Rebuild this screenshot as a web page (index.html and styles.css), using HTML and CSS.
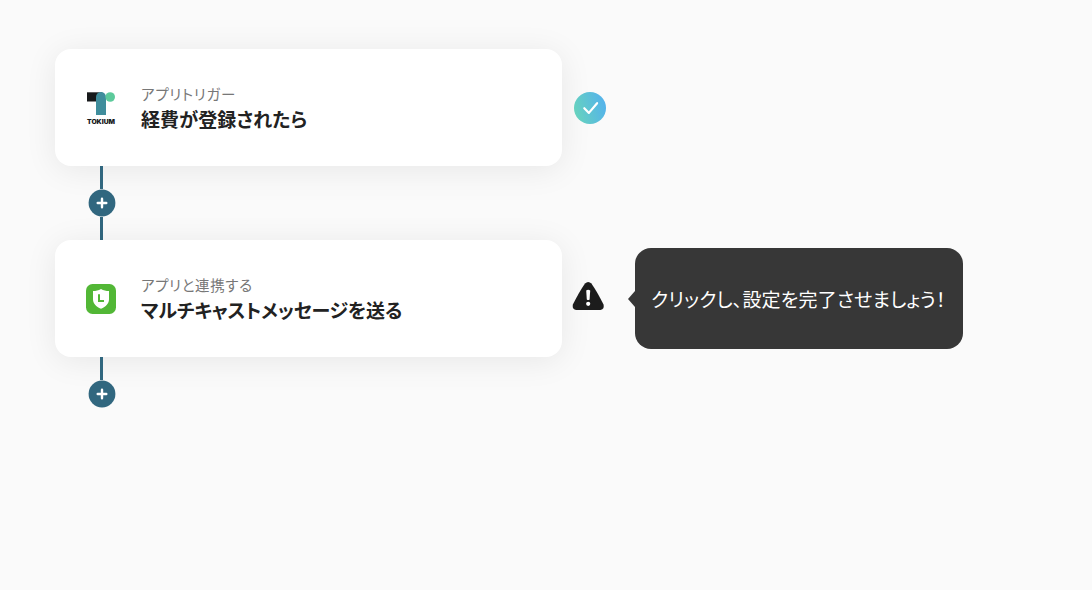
FILE: index.html
```html
<!DOCTYPE html>
<html lang="ja">
<head>
  <meta charset="UTF-8" />
  <meta name="viewport" content="width=device-width, initial-scale=1.0"/>
  <title>フローボット</title>
  <link rel="stylesheet" href="styles.css">
</head>
<body>

  <main class="flow">
    <div class="step">
      <div class="card">
        <svg class="app-icon" width="32" height="34" viewBox="0 0 32 34">
          <rect x="2" y="1.300" width="15" height="9.200" fill="#17191b"/>
          <path d="M11 24V6a5 5 0 0 1 10 0V24z" fill="#3f8d9c"/>
          <circle cx="25.200" cy="6" r="4.800" fill="#5cca9b"/>
          <text class="logo-text" x="2" y="32.600" textLength="28" lengthAdjust="spacingAndGlyphs">TOKIUM</text>
        </svg>
        <div class="card-text">
          <div class="label label-trigger">アプリトリガー</div>
          <div class="title title-trigger">経費が登録されたら</div>
        </div>
      </div>
      <svg class="status status-done" width="32" height="32" viewBox="0 0 32 32">
        <defs>
          <linearGradient id="done" x1="0" y1="0.650" x2="1" y2="0.350">
            <stop offset="0" stop-color="#67d3bd"/>
            <stop offset="1" stop-color="#54b2ec"/>
          </linearGradient>
        </defs>
        <circle cx="16" cy="16" r="16" fill="url(#done)"/>
        <path d="M10.300 16.200l4.600 4.700 8.200-9.700" fill="none" stroke="#fff" stroke-width="2.200" stroke-linecap="round" stroke-linejoin="round"/>
      </svg>
    </div>

    <div class="connector">
      <div class="line"></div>
      <button class="add" aria-label="追加">
        <svg width="28" height="28" viewBox="0 0 28 28"><circle cx="14" cy="14" r="13.400" fill="#31677f"/><path d="M14 9.700v8.600M9.700 14h8.600" stroke="#fff" stroke-width="2.400" stroke-linecap="round"/></svg>
      </button>
      <div class="line"></div>
    </div>

    <div class="step">
      <div class="card">
        <svg class="app-icon" width="32" height="34" viewBox="0 0 32 34">
          <rect x="1" y="2" width="30" height="30" rx="6.500" fill="#52b736"/>
          <path d="M16 7c2.600 1.400 5 2 8 2v8.200c0 4.400-3 7.300-8 9.500-5-2.200-8-5.100-8-9.500V9c3 0 5.400-.6 8-2z" fill="#fff"/>
          <path d="M14 12.300v6.800h5" fill="none" stroke="#52b736" stroke-width="2"/>
        </svg>
        <div class="card-text">
          <div class="label label-action">アプリと連携する</div>
          <div class="title title-action">マルチキャストメッセージを送る</div>
        </div>
      </div>
      <svg class="status status-alert" width="34" height="32" viewBox="0 0 34 32">
        <path d="M14 3.500Q17.200 .5 20.400 3.500 26 11.500 32.400 24.300 34 29 29.500 30H5Q.4 29 2 24.300 8.400 11.500 14 3.500z" fill="#1c1c1c"/>
        <path d="M15.200 10.500q2-1.700 4 0l-.6 9q-1.400 1-2.800 0z" fill="#fff"/>
        <circle cx="17.200" cy="23.800" r="2.100" fill="#fff"/>
      </svg>
      <div class="tooltip">クリックし、設定を完了させましょう！</div>
    </div>

    <div class="connector">
      <div class="line"></div>
      <button class="add" aria-label="追加">
        <svg width="28" height="28" viewBox="0 0 28 28"><circle cx="14" cy="14" r="13.400" fill="#31677f"/><path d="M14 9.700v8.600M9.700 14h8.600" stroke="#fff" stroke-width="2.400" stroke-linecap="round"/></svg>
      </button>
    </div>
  </main>

</body>
</html>
```
FILE: styles.css
```css
* {
  box-sizing: border-box;
}

body {
  margin: 0;
  background-color: #fafafa;
  color: #222;
  font-family: "Noto Sans CJK JP", sans-serif;
  font-feature-settings: "palt";
}

.flow {
  padding: 49px 0 0 55px;
}

.step {
  display: flex;
  align-items: center;
}

.card {
  display: flex;
  align-items: center;
  width: 507px;
  height: 117px;
  padding-left: 30px;
  background-color: #fff;
  border-radius: 16px;
  box-shadow: 0 4px 32px rgba(0, 0, 0, 0.08);
}

.app-icon {
  flex: none;
}

.card-text {
  margin-left: 24px;
  padding-top: 2px;
  white-space: nowrap;
}

.label {
  font-size: 14.500px;
  line-height: 21px;
  color: #777;
  letter-spacing: 0.750px;
}

.label-action {
  letter-spacing: 0.650px;
}

.title {
  font-size: 19px;
  line-height: 30px;
  font-weight: bold;
}

.title-trigger {
  letter-spacing: 0.100px;
}

.title-action {
  letter-spacing: -0.170px;
}

.logo-text {
  font-family: Inter, sans-serif;
  font-size: 5.800px;
  font-weight: 900;
  fill: #17191b;
}

.status {
  flex: none;
}

.status-done {
  margin-left: 12px;
}

.status-alert {
  margin-left: 9px;
  margin-bottom: 6px;
}

.connector {
  display: flex;
  flex-direction: column;
  align-items: center;
  width: 28px;
  margin-left: 33px;
}

.line {
  width: 3px;
  height: 23px;
  margin-right: 1px;
  background-color: #31677f;
}

.add {
  display: block;
  width: 28px;
  height: 28px;
  padding: 0;
  border: none;
  background: none;
  cursor: pointer;
}

.add svg {
  display: block;
}

.tooltip {
  position: relative;
  display: flex;
  align-items: center;
  width: 328px;
  height: 101px;
  margin-left: 30px;
  padding-left: 16px;
  border-radius: 16px;
  background-color: #373737;
  color: #fff;
  font-size: 19px;
  letter-spacing: 0.200px;
  white-space: nowrap;
}

.tooltip::before {
  content: "";
  position: absolute;
  top: 43px;
  left: -7px;
  border: 8px solid transparent;
  border-left: none;
  border-right: 7px solid #373737;
}
```
